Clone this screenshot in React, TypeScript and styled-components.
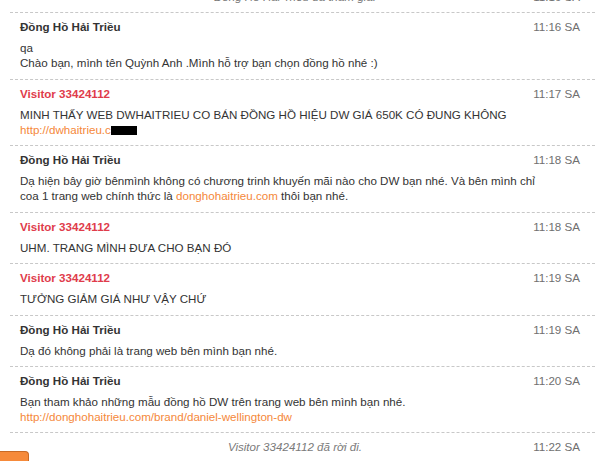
import styled, { createGlobalStyle } from 'styled-components';

const Global = createGlobalStyle`
  html, body { margin: 0; padding: 0; background: #fff; }
  body { font-family: "Liberation Sans", Arial, sans-serif; font-size: 11.6px; color: #333; overflow: hidden; }
`;

const Log = styled.div`
  margin: -17px 5px 0 10px;
  height: 468px;
  overflow: hidden;
`;

const Row = styled.div`
  display: grid;
  grid-template-columns: 1fr auto;
  padding: 6px 15px 8.43px 10px;
  border-bottom: 1px dashed #c8c8c8;
  line-height: 15px;
`;

const Name = styled.div<{ $visitor: boolean }>`
  font-weight: 700;
  color: ${({ $visitor }) => ($visitor ? '#e03c4b' : '#333')};
`;

const Time = styled.div`
  color: #6f6f6f;
  text-align: right;
`;

const Body = styled.div`
  grid-column: 1 / -1;
  margin-top: 6px;
  color: #333;
`;

const Line = styled.div`
  height: 15px;
  white-space: nowrap;
`;

const Link = styled.span`
  color: #f5883a;
`;

const Redact = styled.span`
  display: inline-block;
  width: 26px;
  height: 9px;
  background: #000;
  vertical-align: -1px;
`;

const SystemRow = styled(Row)`
  grid-template-columns: 1fr;
  padding-left: 0;
  padding-right: 15px;
`;

const SystemText = styled.div`
  grid-area: 1 / 1;
  text-align: center;
  font-style: italic;
  color: #7a7a7a;
`;

const SystemTime = styled(Time)`
  grid-area: 1 / 1;
  justify-self: end;
`;

const Footer = styled.div`
  display: flex;
`;

const OrangeButton = styled.button`
  width: 29px;
  height: 20px;
  padding: 0;
  background: #f68a3a;
  border: 1px solid #c86a26;
  border-left: none;
  border-bottom: none;
  border-radius: 0 4px 0 0;
`;

type Msg = { name: string; visitor?: boolean; time: string; lines: React.ReactNode[] };

const messages: Msg[] = [
  {
    name: 'Đồng Hồ Hải Triều',
    time: '11:16 SA',
    lines: ['qa', 'Chào bạn, mình tên Quỳnh Anh .Mình hỗ trợ bạn chọn đồng hồ nhé :)'],
  },
  {
    name: 'Visitor 33424112',
    visitor: true,
    time: '11:17 SA',
    lines: [
      'MINH THẤY WEB DWHAITRIEU CO BÁN ĐỒNG HỒ HIỆU DW GIÁ 650K CÓ ĐUNG KHÔNG',
      <Link>
        http://dwhaitrieu.c<Redact />
      </Link>,
    ],
  },
  {
    name: 'Đồng Hồ Hải Triều',
    time: '11:18 SA',
    lines: [
      'Dạ hiện bây giờ bênmình không có chương trinh khuyến mãi nào cho DW bạn nhé. Và bên mình chỉ',
      <>
        coa 1 trang web chính thức là <Link>donghohaitrieu.com</Link> thôi bạn nhé.
      </>,
    ],
  },
  { name: 'Visitor 33424112', visitor: true, time: '11:18 SA', lines: ['UHM. TRANG MÌNH ĐƯA CHO BẠN ĐÓ'] },
  { name: 'Visitor 33424112', visitor: true, time: '11:19 SA', lines: ['TƯỞNG GIẢM GIÁ NHƯ VẬY CHỨ'] },
  { name: 'Đồng Hồ Hải Triều', time: '11:19 SA', lines: ['Dạ đó không phải là trang web bên mình bạn nhé.'] },
  {
    name: 'Đồng Hồ Hải Triều',
    time: '11:20 SA',
    lines: [
      'Bạn tham khảo những mẫu đồng hồ DW trên trang web bên mình bạn nhé.',
      <Link>http://donghohaitrieu.com/brand/daniel-wellington-dw</Link>,
    ],
  },
];

export default function App() {
  return (
    <>
      <Global />
      <Log>
        <SystemRow>
          <SystemText>Đồng Hồ Hải Triều đã tham gia.</SystemText>
          <SystemTime>11:16 SA</SystemTime>
        </SystemRow>
        {messages.map((m, i) => (
          <Row key={i}>
            <Name $visitor={!!m.visitor}>{m.name}</Name>
            <Time>{m.time}</Time>
            <Body>
              {m.lines.map((l, j) => (
                <Line key={j}>{l}</Line>
              ))}
            </Body>
          </Row>
        ))}
        <SystemRow>
          <SystemText>Visitor 33424112 đã rời đi.</SystemText>
          <SystemTime>11:22 SA</SystemTime>
        </SystemRow>
      </Log>
      <Footer>
        <OrangeButton aria-label="menu" />
      </Footer>
    </>
  );
}
